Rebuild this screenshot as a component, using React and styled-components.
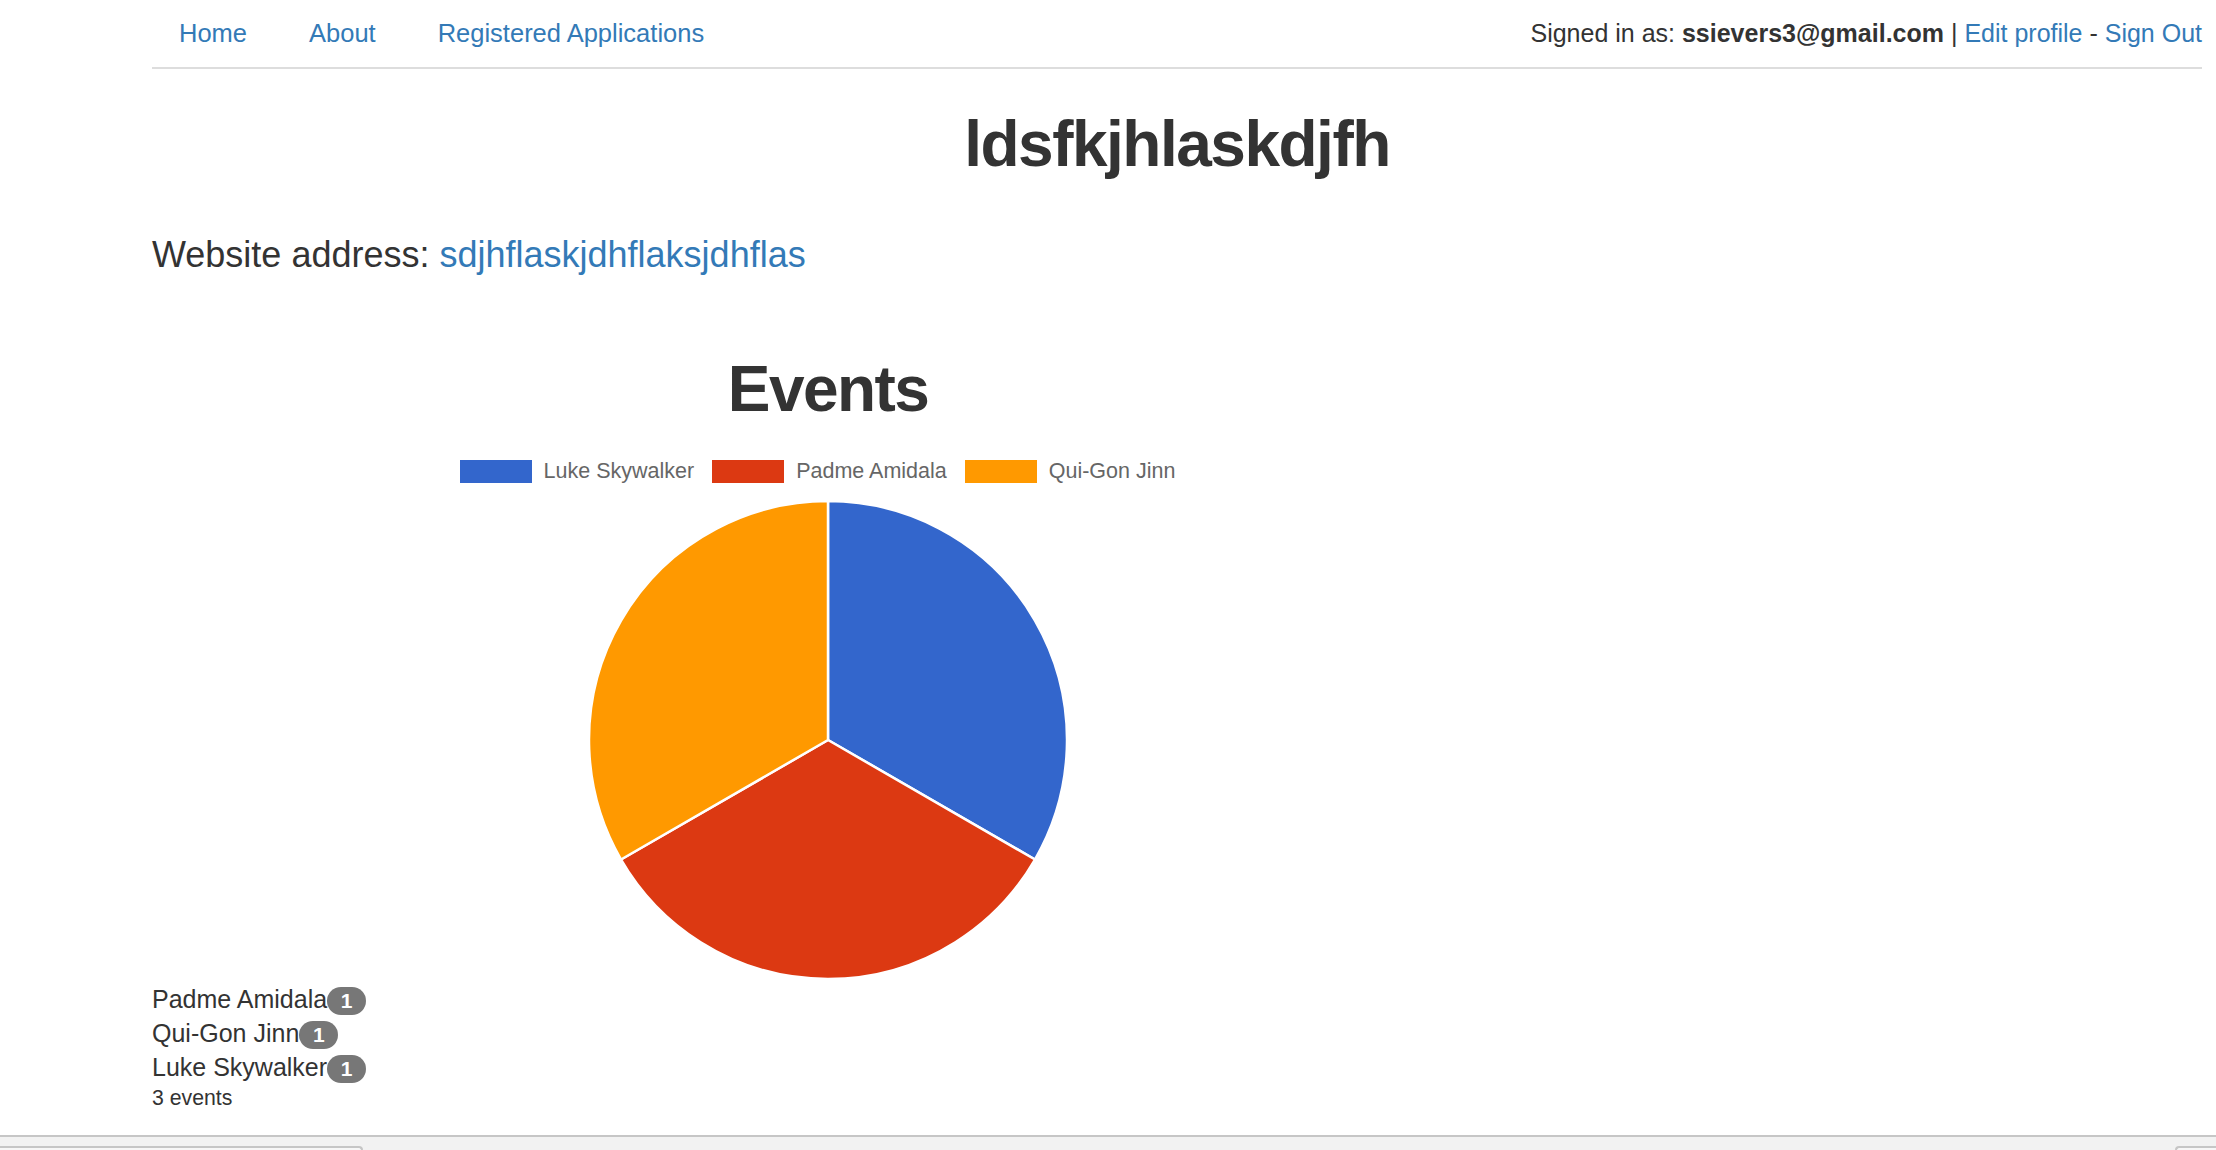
import React from 'react';
import styled, { createGlobalStyle } from 'styled-components';

const slices = [
  { name: 'Luke Skywalker', value: 1, color: '#3366cc' },
  { name: 'Padme Amidala', value: 1, color: '#dc3912' },
  { name: 'Qui-Gon Jinn', value: 1, color: '#ff9900' },
];

const counts = [
  { name: 'Padme Amidala', count: 1 },
  { name: 'Qui-Gon Jinn', count: 1 },
  { name: 'Luke Skywalker', count: 1 },
];

const SIZE = 482;
const R = 239;

const point = (angle) => {
  const rad = (angle * Math.PI) / 180;
  return [SIZE / 2 + R * Math.cos(rad), SIZE / 2 + R * Math.sin(rad)];
};

const PieChart = () => {
  const total = slices.reduce((sum, s) => sum + s.value, 0);
  let start = -90;
  const paths = slices.map((slice) => {
    const sweep = (slice.value / total) * 360;
    const [x1, y1] = point(start);
    const [x2, y2] = point(start + sweep);
    const large = sweep > 180 ? 1 : 0;
    const d = `M${SIZE / 2},${SIZE / 2} L${x1},${y1} A${R},${R} 0 ${large} 1 ${x2},${y2} Z`;
    start += sweep;
    return <path key={slice.name} d={d} fill={slice.color} stroke="#fff" strokeWidth="2.5" strokeLinejoin="round" />;
  });
  return (
    <StyledPie width={SIZE} height={SIZE} viewBox={`0 0 ${SIZE} ${SIZE}`}>
      {paths}
    </StyledPie>
  );
};

const App = () => {
  return (
    <StyledPage>
      <GlobalStyle />
      <StyledContainer>

        {/* Top nav */}
        <StyledNavbar>
          <StyledNavList>
            <StyledNavLink href="#">Home</StyledNavLink>
            <StyledNavLink href="#">About</StyledNavLink>
            <StyledNavLink href="#">Registered Applications</StyledNavLink>
          </StyledNavList>
          <StyledUser>
            Signed in as: <strong>ssievers3@gmail.com</strong> | <StyledLink href="#">Edit profile</StyledLink> - <StyledLink href="#">Sign Out</StyledLink>
          </StyledUser>
        </StyledNavbar>

        <StyledTitle>ldsfkjhlaskdjfh</StyledTitle>
        <StyledLead>
          Website address: <StyledLink href="#">sdjhflaskjdhflaksjdhflas</StyledLink>
        </StyledLead>

        {/* Chart */}
        <StyledChart>
          <StyledChartTitle>Events</StyledChartTitle>
          <StyledLegend>
            {slices.map((slice) => (
              <StyledLegendItem key={slice.name}>
                <StyledSwatch color={slice.color} />
                {slice.name}
              </StyledLegendItem>
            ))}
          </StyledLegend>
          <PieChart />
        </StyledChart>

        {/* Counts */}
        <StyledCounts>
          {counts.map((row) => (
            <StyledCountRow key={row.name}>
              {row.name}<StyledBadge>{row.count}</StyledBadge>
            </StyledCountRow>
          ))}
          <StyledTotal>3 events</StyledTotal>
        </StyledCounts>

      </StyledContainer>

      <StyledBottomBar>
        <StyledTab side="left" />
        <StyledTab side="right" />
      </StyledBottomBar>
    </StyledPage>
  );
};

const GlobalStyle = createGlobalStyle`
  html, body {
    margin: 0;
    padding: 0;
    background: #fff;
  }
  body {
    font-family: "Liberation Sans", Helvetica, Arial, sans-serif;
    color: #333;
  }
  * {
    box-sizing: border-box;
  }
`
const StyledPage = styled.div`
  display: flex;
  flex-direction: column;
  min-height: 100vh;
`
const StyledContainer = styled.div`
  flex: 1;
  padding: 0 14px 0 152px;
`
const StyledNavbar = styled.nav`
  display: flex;
  justify-content: space-between;
  align-items: flex-start;
  height: 69px;
  padding-top: 19px;
  border-bottom: 2px solid #ddd;
  font-size: 25px;
  line-height: 29px;
`
const StyledNavList = styled.div`
  display: flex;
  gap: 8px;
  font-size: 25.5px;
`
const StyledNavLink = styled.a`
  color: #337ab7;
  text-decoration: none;
  padding: 0 27px;
`
const StyledLink = styled.a`
  color: #337ab7;
  text-decoration: none;
`
const StyledUser = styled.div`
  color: #333;
  white-space: nowrap;
  strong {
    font-weight: 700;
  }
`
const StyledTitle = styled.h1`
  margin: 39px 0 0;
  text-align: center;
  font-size: 64px;
  line-height: 72px;
  font-weight: 700;
  letter-spacing: -1.5px;
  color: #333;
`
const StyledLead = styled.p`
  margin: 53px 0 0;
  font-size: 36px;
  line-height: 44px;
  font-weight: 300;
  color: #333;
`
const StyledChart = styled.div`
  width: 1352px;
  display: flex;
  flex-direction: column;
  align-items: center;
`
const StyledChartTitle = styled.h2`
  margin: 76px 0 0;
  font-size: 64px;
  line-height: 72px;
  font-weight: 700;
  letter-spacing: -1.6px;
  color: #333;
`
const StyledLegend = styled.div`
  margin-top: 34px;
  display: flex;
  gap: 18px;
  padding-right: 21px;
  font-size: 21.5px;
  line-height: 24px;
  color: #666;
`
const StyledLegendItem = styled.div`
  display: flex;
  align-items: center;
  gap: 12px;
`
const StyledSwatch = styled.span`
  width: 72px;
  height: 23px;
  background: ${props => props.color};
`
const StyledPie = styled.svg`
  display: block;
  margin-top: 16px;
`
const StyledCounts = styled.div`
  margin-top: 1px;
`
const StyledCountRow = styled.div`
  font-size: 25px;
  line-height: 34px;
  color: #333;
`
const StyledBadge = styled.span`
  display: inline-block;
  vertical-align: middle;
  min-width: 39px;
  padding: 3px 13px;
  border-radius: 18px;
  background: #777;
  color: #fff;
  font-size: 21px;
  line-height: 22px;
  font-weight: 700;
  text-align: center;
`
const StyledTotal = styled.div`
  font-size: 21.25px;
  line-height: 28px;
  color: #333;
`
const StyledBottomBar = styled.div`
  height: 15px;
  border-top: 2px solid #c6c6c6;
  background: #f2f2f2;
  display: flex;
  justify-content: space-between;
  align-items: flex-end;
`
const StyledTab = styled.div`
  height: 4px;
  width: ${props => props.side === 'left' ? '363px' : '41px'};
  background: #f7f7f7;
  border-top: 2px solid #c6c6c6;
  ${props => props.side === 'left'
    ? 'border-right: 2px solid #c6c6c6; border-top-right-radius: 6px;'
    : 'border-left: 2px solid #c6c6c6; border-top-left-radius: 6px;'}
`

export default App;
